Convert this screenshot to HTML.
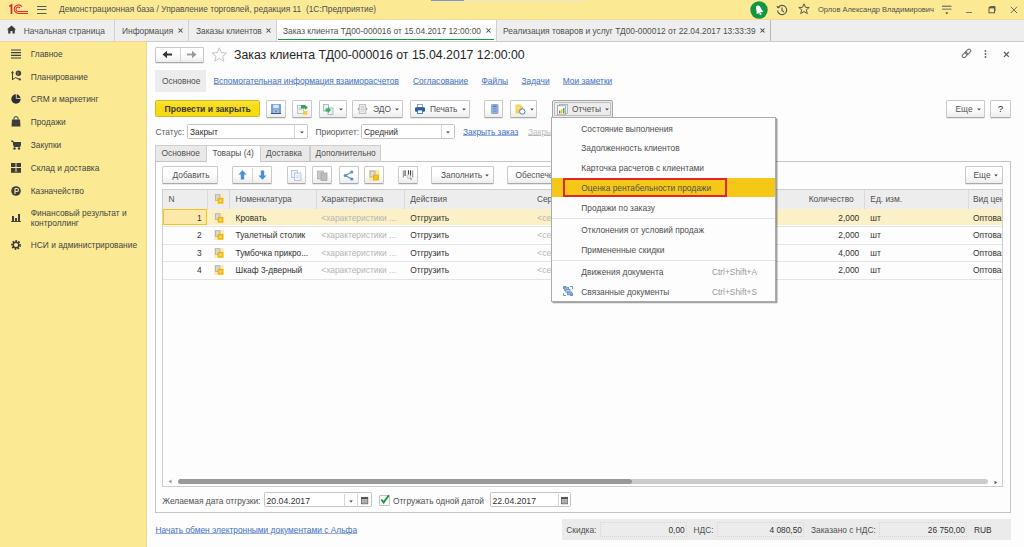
<!DOCTYPE html><html><head><meta charset="utf-8"><style>
html,body{margin:0;padding:0;width:1024px;height:547px;overflow:hidden;background:#fdfdfd}
body{position:relative;font-family:"Liberation Sans",sans-serif;font-size:8.4px;color:#505050}
.a{position:absolute;box-sizing:border-box}
.t{position:absolute;white-space:nowrap}
.lnk{color:#4070c2;text-decoration:underline;text-decoration-color:rgba(64,112,194,0.55);text-underline-offset:0.3px}
</style></head><body>
<div class="a" style="left:0px;top:0px;width:1024.00px;height:19.00px;background:#fce994"></div>
<div class="a" style="left:0px;top:19px;width:1024.00px;height:1.00px;background:#eedf9a"></div>
<div class="a" style="left:431px;top:0px;width:33.00px;height:1.00px;background:#8596cc"></div>
<div class="a" style="left:464px;top:0px;width:124.00px;height:1.00px;background:#ebe6c6"></div>
<div class="a" style="left:0px;top:20px;width:1024.00px;height:21.00px;background:#eeeeef"></div>
<div class="a" style="left:0px;top:41px;width:1024.00px;height:1.00px;background:#cdcdcd"></div>
<div class="a" style="left:0px;top:41px;width:147.00px;height:1.00px;background:#e2d9a6"></div>
<div class="a" style="left:0px;top:42px;width:146.80px;height:505.00px;background:#fce994"></div>
<div class="a" style="left:146.8px;top:42px;width:877.20px;height:505.00px;background:#fdfdfd"></div>
<div class="a" style="left:146px;top:42px;width:1.00px;height:505.00px;background:#eadb8a"></div>
<svg class="a" style="left:8px;top:3px" width="22" height="12" viewBox="0 0 22 12"><g fill="none" stroke="#e3262b" stroke-width="1.05"><path d="M1.3 3.4 L3.5 2 V11" stroke-width="1.7"/><path d="M13.9 3.6 A4.3 4.3 0 1 0 10.3 10.5 H20"/><path d="M12 5.1 A2.2 2.2 0 1 0 10.3 8.5 H20"/></g></svg>
<svg class="a" style="left:37px;top:5px" width="10" height="10" viewBox="0 0 10 10"><g stroke="#5a5a5a" stroke-width="1"><path d="M0 1.5H9.5M0 4.5H9.5M0 8.5H9.5"/></g></svg>
<div class="t " style="left:59px;top:3.40px;line-height:12px;">Демонстрационная база / Управление торговлей, редакция 11&nbsp; (1С:Предприятие)</div>
<svg class="a" style="left:750px;top:1px" width="18" height="18" viewBox="0 0 18 18"><circle cx="9" cy="9" r="8.7" fill="#13963f"/><g transform="rotate(-20 9 9)"><path d="M5.2 12 Q6.5 10.5 6.5 8 Q6.5 4.5 9 4.3 Q11.5 4.5 11.5 8 Q11.5 10.5 12.8 12Z" fill="#fff"/><circle cx="9" cy="13.2" r="1.1" fill="#fff"/></g></svg>
<svg class="a" style="left:776px;top:4px" width="12" height="12" viewBox="0 0 12 12"><g fill="none" stroke="#555" stroke-width="1.1"><path d="M2.2 3.5 A4.6 4.6 0 1 1 1.5 6.5"/><path d="M6 3.5V6.5L8 8"/><path d="M0.8 2.2 L2.2 3.8 L3.9 2.6"/></g></svg>
<svg class="a" style="left:798px;top:3px" width="12" height="12" viewBox="0 0 12 12"><path d="M6 0.8 L7.5 4.3 L11.2 4.5 L8.3 6.9 L9.3 10.6 L6 8.5 L2.7 10.6 L3.7 6.9 L0.8 4.5 L4.5 4.3Z" fill="none" stroke="#555" stroke-width="1"/></svg>
<div class="t " style="left:818px;top:3.60px;line-height:12px;font-size:7.5px">Орлов Александр Владимирович</div>
<svg class="a" style="left:941px;top:5px" width="11" height="11" viewBox="0 0 11 11"><g stroke="#555" stroke-width="1"><path d="M1 1.2H10.5"/></g><path d="M1 4.2H10.5" stroke="#8a8f70" stroke-width="1.3"/><path d="M4.3 7.5 H7.3 L5.8 9.2Z" fill="#333"/></svg>
<div class="a" style="left:966px;top:11.8px;width:6.30px;height:1.00px;background:#7a7a6a"></div>
<svg class="a" style="left:988px;top:6px" width="8" height="8" viewBox="0 0 8 8"><g fill="none" stroke="#5a5a50" stroke-width="1"><rect x="1" y="1.8" width="5.5" height="5"/><path d="M1 1.3H6.5" stroke-width="1.6"/><path d="M2.5 0.6H7V5.2"/></g></svg>
<svg class="a" style="left:1010px;top:6px" width="8" height="8" viewBox="0 0 8 8"><g stroke="#6a6a60" stroke-width="1"><path d="M0.8 0.8L7 7M7 0.8L0.8 7"/></g></svg>
<svg class="a" style="left:7px;top:25px" width="9" height="9" viewBox="0 0 9 9"><path d="M4.5 0.5 L9 4.5 H7.8 V8.5 H5.5 V6 H3.5 V8.5 H1.2 V4.5 H0Z" fill="#3a3a3a"/></svg>
<div class="t " style="left:23.8px;top:24.60px;line-height:12px;">Начальная страница</div>
<div class="a" style="left:114px;top:20px;width:1.00px;height:21.00px;background:#d2d2d6"></div>
<div class="t " style="left:122px;top:24.60px;line-height:12px;">Информация</div>
<svg class="a" style="left:178px;top:28px" width="5" height="5" viewBox="0 0 5 5"><path d="M0.5 0.5L4.5 4.5M4.5 0.5L0.5 4.5" stroke="#4a4a4a" stroke-width="1.05"/></svg>
<div class="a" style="left:188px;top:20px;width:1.00px;height:21.00px;background:#d2d2d6"></div>
<div class="t " style="left:196px;top:24.60px;line-height:12px;">Заказы клиентов</div>
<svg class="a" style="left:266px;top:28px" width="5" height="5" viewBox="0 0 5 5"><path d="M0.5 0.5L4.5 4.5M4.5 0.5L0.5 4.5" stroke="#4a4a4a" stroke-width="1.05"/></svg>
<div class="a" style="left:276px;top:20px;width:1.00px;height:21.00px;background:#d2d2d6"></div>
<div class="a" style="left:277px;top:20px;width:219.00px;height:21.00px;background:#ffffff"></div>
<div class="a" style="left:277.8px;top:38.7px;width:216.20px;height:1.30px;background:#139a3c"></div>
<div class="t " style="left:283px;top:24.60px;line-height:12px;">Заказ клиента ТД00-000016 от 15.04.2017 12:00:00</div>
<svg class="a" style="left:486px;top:28px" width="5" height="5" viewBox="0 0 5 5"><path d="M0.5 0.5L4.5 4.5M4.5 0.5L0.5 4.5" stroke="#4a4a4a" stroke-width="1.05"/></svg>
<div class="a" style="left:496px;top:20px;width:1.00px;height:21.00px;background:#d2d2d6"></div>
<div class="t " style="left:503px;top:24.60px;line-height:12px;">Реализация товаров и услуг ТД00-000012 от 22.04.2017 13:33:39</div>
<svg class="a" style="left:760px;top:28px" width="5" height="5" viewBox="0 0 5 5"><path d="M0.5 0.5L4.5 4.5M4.5 0.5L0.5 4.5" stroke="#4a4a4a" stroke-width="1.05"/></svg>
<div class="a" style="left:770px;top:20px;width:1.00px;height:21.00px;background:#b9b9b9"></div>
<div class="t " style="left:30.7px;top:47.70px;line-height:12px;color:#454545">Главное</div>
<div class="t " style="left:30.7px;top:70.60px;line-height:12px;color:#454545">Планирование</div>
<div class="t " style="left:30.7px;top:93.40px;line-height:12px;color:#454545">CRM и маркетинг</div>
<div class="t " style="left:30.7px;top:116.30px;line-height:12px;color:#454545">Продажи</div>
<div class="t " style="left:30.7px;top:139.00px;line-height:12px;color:#454545">Закупки</div>
<div class="t " style="left:30.7px;top:162.25px;line-height:12px;color:#454545">Склад и доставка</div>
<div class="t " style="left:30.7px;top:184.75px;line-height:12px;color:#454545">Казначейство</div>
<div class="t " style="left:30.7px;top:239.00px;line-height:12px;color:#454545">НСИ и администрирование</div>
<div class="t " style="left:30.7px;top:206.75px;line-height:12px;color:#454545">Финансовый результат и</div>
<div class="t " style="left:30.7px;top:216.75px;line-height:12px;color:#454545">контроллинг</div>
<svg class="a" style="left:11px;top:49px" width="10" height="10" viewBox="0 0 10 10"><g stroke="#3d3d3d" stroke-width="1.2"><path d="M0 1H10M0 3.7H10M0 6.3H10M0 9H10"/></g></svg>
<svg class="a" style="left:11px;top:70px" width="11" height="11" viewBox="0 0 11 11"><g fill="none" stroke="#3d3d3d" stroke-width="1"><path d="M1.5 10V2"/><path d="M1.5 9.6 L4.5 7.6 L8.8 9.4"/></g><path d="M0 3.2 L1.5 0.8 L3 3.2Z" fill="#3d3d3d"/><circle cx="8.8" cy="9.4" r="1.1" fill="#3d3d3d"/><circle cx="7.4" cy="3.3" r="2.7" fill="#3d3d3d"/><path d="M7 1.8V4.6" stroke="#bdb58a" stroke-width="0.8"/></svg>
<svg class="a" style="left:11.3px;top:94.2px" width="10" height="10" viewBox="0 0 10 10"><circle cx="5" cy="5" r="4.7" fill="#2e2e36"/><path d="M5.3 0 V4.4 H10" fill="none" stroke="#e8e0b0" stroke-width="0.9"/></svg>
<svg class="a" style="left:11px;top:116px" width="10" height="11" viewBox="0 0 10 11"><path d="M1 3.5 H9 L9.5 10.5 H0.5Z" fill="#3d3d3d"/><path d="M3 3.5 V1.5 Q5 -0.5 7 1.5 V3.5" fill="none" stroke="#3d3d3d" stroke-width="1"/></svg>
<svg class="a" style="left:11px;top:140px" width="10" height="10" viewBox="0 0 10 10"><path d="M0 1 H2 L3 6.5 H9 L10 2.5 H2.5" fill="#3d3d3d" stroke="#3d3d3d" stroke-width="1"/><circle cx="3.5" cy="8.5" r="1.2" fill="#3d3d3d"/><circle cx="8" cy="8.5" r="1.2" fill="#3d3d3d"/></svg>
<svg class="a" style="left:11px;top:163px" width="10" height="10" viewBox="0 0 10 10"><g fill="#3d3d3d"><rect x="0" y="0" width="4.5" height="4"/><rect x="5.5" y="0" width="4.5" height="4"/><rect x="0" y="5" width="4.5" height="4"/><rect x="5.5" y="5" width="4.5" height="4"/><rect x="0" y="9.2" width="10" height="0.8"/></g></svg>
<svg class="a" style="left:11px;top:186px" width="10" height="10" viewBox="0 0 10 10"><circle cx="5" cy="5" r="4.8" fill="#3d3d3d"/><path d="M4 2.5 H6 Q7.5 2.5 7.5 4 Q7.5 5.5 6 5.5 H4 M4 2.5 V8" fill="none" stroke="#fbeca2" stroke-width="1.1"/></svg>
<svg class="a" style="left:11px;top:213px" width="10" height="9" viewBox="0 0 10 9"><g fill="#3d3d3d"><rect x="1" y="3" width="2" height="6"/><rect x="4" y="5" width="2" height="4"/><rect x="7" y="1" width="2" height="8"/><rect x="0" y="8.2" width="10" height="0.8"/></g></svg>
<svg class="a" style="left:11px;top:240px" width="10" height="10" viewBox="0 0 10 10"><circle cx="5" cy="5" r="3.8" fill="none" stroke="#3d3d3d" stroke-width="2.2" stroke-dasharray="1.6 1.2"/><circle cx="5" cy="5" r="2.8" fill="none" stroke="#3d3d3d" stroke-width="1.4"/></svg>
<div class="a" style="left:155px;top:47px;width:49.00px;height:15.50px;border:1px solid #c9c9c9;border-bottom-color:#a9a9a9;border-radius:1.5px;background:linear-gradient(#ffffff 45%,#ededed);box-shadow:0 0.6px 0 #d4d4d4;"></div>
<div class="a" style="left:179.5px;top:48px;width:1.00px;height:13.50px;background:#d6d6d6"></div>
<svg class="a" style="left:162px;top:50px" width="11" height="9" viewBox="0 0 11 9"><path d="M3 4.5 H10" stroke="#333" stroke-width="2"/><path d="M0.5 4.5 L5 0.8 V8.2Z" fill="#333"/></svg>
<svg class="a" style="left:186px;top:50px" width="11" height="9" viewBox="0 0 11 9"><path d="M1 4.5 H8" stroke="#9a9a9a" stroke-width="1.8"/><path d="M10.5 4.5 L6 0.8 V8.2Z" fill="#9a9a9a"/></svg>
<svg class="a" style="left:211px;top:47px" width="17" height="15" viewBox="0 0 17 15"><path d="M8.3 0.8 L10.3 5.6 L15.6 6 L11.6 9.3 L12.9 14.2 L8.3 11.5 L3.7 14.2 L5 9.3 L1 6 L6.3 5.6Z" fill="none" stroke="#c4c4c4" stroke-width="1"/></svg>
<div class="t " style="left:234px;top:46.70px;line-height:16px;font-size:12.3px;color:#262626">Заказ клиента ТД00-000016 от 15.04.2017 12:00:00</div>
<svg class="a" style="left:960.5px;top:48px" width="11" height="11" viewBox="0 0 11 11"><g fill="none" stroke="#707070" stroke-width="1.1"><rect x="0.9" y="5.2" width="6" height="3.4" rx="1.7" transform="rotate(-45 3.9 6.9)"/><rect x="4.1" y="2" width="6" height="3.4" rx="1.7" transform="rotate(-45 7.1 3.7)"/></g></svg>
<svg class="a" style="left:984px;top:49px" width="3" height="10" viewBox="0 0 3 10"><g fill="#606060"><circle cx="1.5" cy="2" r="0.95"/><circle cx="1.5" cy="5" r="0.95"/><circle cx="1.5" cy="8" r="0.95"/></g></svg>
<svg class="a" style="left:1003px;top:51px" width="7" height="7" viewBox="0 0 7 7"><g stroke="#5a5a5a" stroke-width="1.2"><path d="M1 1L5.8 5.8M5.8 1L1 5.8"/></g></svg>
<div class="a" style="left:154.8px;top:69.5px;width:51.20px;height:22.00px;background:#ececec"></div>
<div class="t " style="left:162px;top:75.00px;line-height:12px;">Основное</div>
<div class="t lnk" style="left:213.5px;top:75.00px;line-height:12px;">Вспомогательная информация взаиморасчетов</div>
<div class="t lnk" style="left:413px;top:75.00px;line-height:12px;">Согласование</div>
<div class="t lnk" style="left:481.5px;top:75.00px;line-height:12px;">Файлы</div>
<div class="t lnk" style="left:521.5px;top:75.00px;line-height:12px;">Задачи</div>
<div class="t lnk" style="left:562.75px;top:75.00px;line-height:12px;">Мои заметки</div>
<div class="a" style="left:154.9px;top:99.9px;width:105.30px;height:17.60px;border:1px solid #d2b920;border-radius:1.5px;background:linear-gradient(#f9e23a,#f8dc14 40%,#f7da12)"></div>
<div class="t " style="left:164.6px;top:102.70px;line-height:12px;font-weight:bold;font-size:8.6px;color:#3a3a3a">Провести и закрыть</div>
<div class="a" style="left:266.2px;top:100px;width:19.80px;height:17.50px;border:1px solid #c9c9c9;border-bottom-color:#a9a9a9;border-radius:1.5px;background:linear-gradient(#ffffff 45%,#ededed);box-shadow:0 0.6px 0 #d4d4d4;"></div>
<svg class="a" style="left:271px;top:104px" width="10" height="10" viewBox="0 0 10 10"><path d="M0 0.8 Q0 0 0.8 0 H9.2 Q10 0 10 0.8 V10 H0Z" fill="#76a0d6"/><rect x="2.2" y="0.8" width="5.6" height="3.4" fill="#dfe8f5"/><rect x="2.4" y="5.6" width="5.2" height="3.4" fill="#b9c9e0"/><rect x="3.8" y="6.3" width="2.4" height="2" fill="#7e8da4"/><rect x="0" y="9" width="10" height="1" fill="#2b5590"/></svg>
<div class="a" style="left:292px;top:100px;width:20.00px;height:17.50px;border:1px solid #c9c9c9;border-bottom-color:#a9a9a9;border-radius:1.5px;background:linear-gradient(#ffffff 45%,#ededed);box-shadow:0 0.6px 0 #d4d4d4;"></div>
<svg class="a" style="left:296.5px;top:104px" width="11" height="11" viewBox="0 0 11 11"><rect x="0.5" y="1.5" width="6" height="8" fill="#f3f3f3" stroke="#a9b8cc" stroke-width="0.8"/><path d="M1.8 4H5M1.8 5.6H5" stroke="#b0b0b0" stroke-width="0.7"/><path d="M4 1 H8 L10.8 3.5 L8 6 V4.5 H4Z" fill="#2fa84f"/><rect x="6" y="7" width="4.5" height="3.8" fill="#f5cf3a"/></svg>
<div class="a" style="left:318.5px;top:100px;width:28.00px;height:17.50px;border:1px solid #c9c9c9;border-bottom-color:#a9a9a9;border-radius:1.5px;background:linear-gradient(#ffffff 45%,#ededed);box-shadow:0 0.6px 0 #d4d4d4;"></div>
<svg class="a" style="left:323px;top:104px" width="11" height="11" viewBox="0 0 11 11"><rect x="0.5" y="0.5" width="5" height="6.5" fill="#f1f1f1" stroke="#98acc8" stroke-width="0.8"/><rect x="5" y="4" width="5" height="6.5" fill="#f1f1f1" stroke="#98acc8" stroke-width="0.8"/><path d="M2.5 4.5 H5 V3 L8 6 L5 9 V7.5 H2.5Z" fill="#34b45a"/></svg>
<svg class="a" style="left:338.5px;top:107.6px" width="4" height="3" viewBox="0 0 4 3"><path d="M0.2 0.5H3.8L2 2.5Z" fill="#444"/></svg>
<div class="a" style="left:352.3px;top:100px;width:51.10px;height:17.50px;border:1px solid #c9c9c9;border-bottom-color:#a9a9a9;border-radius:1.5px;background:linear-gradient(#ffffff 45%,#ededed);box-shadow:0 0.6px 0 #d4d4d4;"></div>
<svg class="a" style="left:357px;top:104px" width="11" height="10" viewBox="0 0 11 10"><rect x="2.2" y="0.5" width="6.6" height="9" fill="#eeeeee" stroke="#b3b3b3" stroke-width="0.8"/><path d="M3.5 2.5H7.5M3.5 4H7.5M3.5 5.5H7.5M3.5 7H7.5" stroke="#c2c2c2" stroke-width="0.7"/><path d="M0.3 5 L2 3.6V6.4Z M10.7 5 L9 3.6V6.4Z" fill="#a0a0a0"/></svg>
<div class="t " style="left:373px;top:102.70px;line-height:12px;">ЭДО</div>
<svg class="a" style="left:395.0px;top:107.6px" width="4" height="3" viewBox="0 0 4 3"><path d="M0.2 0.5H3.8L2 2.5Z" fill="#444"/></svg>
<div class="a" style="left:409.7px;top:100px;width:60.30px;height:17.50px;border:1px solid #c9c9c9;border-bottom-color:#a9a9a9;border-radius:1.5px;background:linear-gradient(#ffffff 45%,#ededed);box-shadow:0 0.6px 0 #d4d4d4;"></div>
<svg class="a" style="left:415px;top:104px" width="10" height="10" viewBox="0 0 10 10"><rect x="2.5" y="0.5" width="5" height="3" fill="#fff" stroke="#6c8fc0" stroke-width="0.8"/><rect x="0" y="3.3" width="10" height="4.5" rx="1" fill="#2c5ea6"/><rect x="2.5" y="6" width="5" height="3.5" fill="#fff" stroke="#2c5ea6" stroke-width="0.8"/></svg>
<div class="t " style="left:430px;top:102.70px;line-height:12px;">Печать</div>
<svg class="a" style="left:461.5px;top:107.6px" width="4" height="3" viewBox="0 0 4 3"><path d="M0.2 0.5H3.8L2 2.5Z" fill="#444"/></svg>
<div class="a" style="left:484.4px;top:100px;width:19.10px;height:17.50px;border:1px solid #c9c9c9;border-bottom-color:#a9a9a9;border-radius:1.5px;background:linear-gradient(#ffffff 45%,#ededed);box-shadow:0 0.6px 0 #d4d4d4;"></div>
<svg class="a" style="left:490.5px;top:104px" width="8" height="10" viewBox="0 0 8 10"><rect x="0.4" y="0.4" width="6.6" height="9.2" rx="1" fill="#a9c1e6" stroke="#6b8fc7" stroke-width="0.8"/><rect x="1.6" y="1.6" width="4.2" height="1.6" fill="#4f78b8"/><path d="M1.6 4.6H5.8M1.6 6.2H5.8M1.6 7.8H5.8" stroke="#4f78b8" stroke-width="0.7"/></svg>
<div class="a" style="left:510px;top:100px;width:27.40px;height:17.50px;border:1px solid #c9c9c9;border-bottom-color:#a9a9a9;border-radius:1.5px;background:linear-gradient(#ffffff 45%,#ededed);box-shadow:0 0.6px 0 #d4d4d4;"></div>
<svg class="a" style="left:515px;top:103.5px" width="11" height="11" viewBox="0 0 11 11"><path d="M0.5 0.5 H5.5 L8 3 V9.5 H0.5Z" fill="#f1cf56"/><path d="M1.5 3H5M1.5 4.5H4" stroke="#fff3c0" stroke-width="0.7"/><circle cx="7.3" cy="7.5" r="2.7" fill="#fff" stroke="#4f78b8" stroke-width="1"/></svg>
<svg class="a" style="left:529.5px;top:107.6px" width="4" height="3" viewBox="0 0 4 3"><path d="M0.2 0.5H3.8L2 2.5Z" fill="#444"/></svg>
<div class="a" style="left:551.7px;top:100.3px;width:61.30px;height:17.70px;border:1px solid #a4a4a4;border-radius:2px;background:#ececec"></div>
<div class="a" style="left:553.6px;top:102.2px;width:57.60px;height:13.80px;border:1px solid #bdbdbd;border-radius:1px"></div>
<svg class="a" style="left:556.5px;top:104px" width="11" height="11" viewBox="0 0 11 11"><rect x="2.5" y="0.5" width="8" height="9" fill="#f4f4f4" stroke="#9aaac0" stroke-width="0.8"/><rect x="0.5" y="1.8" width="8" height="9" fill="#fff" stroke="#8a9ab0" stroke-width="0.8"/><rect x="2" y="6.5" width="1.4" height="3" fill="#e0502a"/><rect x="4" y="5" width="1.4" height="4.5" fill="#f2c21a"/><rect x="6" y="4" width="1.4" height="5.5" fill="#34a853"/></svg>
<div class="t " style="left:572px;top:102.70px;line-height:12px;">Отчеты</div>
<svg class="a" style="left:604.5px;top:107.6px" width="4" height="3" viewBox="0 0 4 3"><path d="M0.2 0.5H3.8L2 2.5Z" fill="#444"/></svg>
<div class="a" style="left:946.2px;top:100px;width:38.40px;height:17.50px;border:1px solid #c9c9c9;border-bottom-color:#a9a9a9;border-radius:1.5px;background:linear-gradient(#ffffff 45%,#ededed);box-shadow:0 0.6px 0 #d4d4d4;"></div>
<div class="t " style="left:955.5px;top:102.70px;line-height:12px;">Еще</div>
<svg class="a" style="left:976.5px;top:107.6px" width="4" height="3" viewBox="0 0 4 3"><path d="M0.2 0.5H3.8L2 2.5Z" fill="#444"/></svg>
<div class="a" style="left:990.4px;top:100px;width:20.20px;height:17.50px;border:1px solid #c9c9c9;border-bottom-color:#a9a9a9;border-radius:1.5px;background:linear-gradient(#ffffff 45%,#ededed);box-shadow:0 0.6px 0 #d4d4d4;"></div>
<div class="t " style="left:997.8px;top:103.00px;line-height:12px;font-size:9.8px;color:#1a1a1a">?</div>
<div class="t " style="left:155.5px;top:125.70px;line-height:12px;color:#5c5c5c">Статус:</div>
<div class="a" style="left:187px;top:124.1px;width:121.00px;height:14.50px;border:1px solid #c4c4c4;background:#fff;border-radius:1.5px"></div>
<div class="a" style="left:293.6px;top:125.1px;width:1.00px;height:12.50px;background:#d6d6d6"></div>
<div class="t " style="left:190px;top:125.70px;line-height:12px;color:#333">Закрыт</div>
<svg class="a" style="left:299.5px;top:130.8px" width="4" height="3" viewBox="0 0 4 3"><path d="M0.2 0.5H3.8L2 2.5Z" fill="#444"/></svg>
<div class="t " style="left:315.5px;top:125.70px;line-height:12px;color:#5c5c5c">Приоритет:</div>
<div class="a" style="left:361.3px;top:124.1px;width:93.50px;height:14.50px;border:1px solid #c4c4c4;background:#fff;border-radius:1.5px"></div>
<div class="a" style="left:440.6px;top:125.1px;width:1.00px;height:12.50px;background:#d6d6d6"></div>
<div class="t " style="left:364px;top:125.70px;line-height:12px;color:#333">Средний</div>
<svg class="a" style="left:446.0px;top:130.8px" width="4" height="3" viewBox="0 0 4 3"><path d="M0.2 0.5H3.8L2 2.5Z" fill="#444"/></svg>
<div class="t lnk" style="left:463px;top:125.70px;line-height:12px;">Закрыть заказ</div>
<div class="t " style="left:528px;top:125.70px;line-height:12px;color:#b9b9b9;text-decoration:underline;text-underline-offset:0.3px">Закрыть</div>
<div class="a" style="left:155px;top:161px;width:855.50px;height:351.50px;border:1px solid #c4c4c4;background:#fdfdfd"></div>
<div class="a" style="left:155px;top:145.2px;width:51.50px;height:16.30px;border:1px solid #cdcdcd;border-bottom:none;background:#e9e9e9"></div>
<div class="a" style="left:206px;top:145.2px;width:54.50px;height:16.80px;border:1px solid #cdcdcd;border-bottom:none;background:#fdfdfd"></div>
<div class="a" style="left:260px;top:145.2px;width:50.00px;height:16.30px;border:1px solid #cdcdcd;border-bottom:none;background:#e9e9e9"></div>
<div class="a" style="left:309.5px;top:145.2px;width:71.50px;height:16.30px;border:1px solid #cdcdcd;border-bottom:none;background:#e9e9e9"></div>
<div class="t " style="left:161.5px;top:147.00px;line-height:12px;">Основное</div>
<div class="t " style="left:212.5px;top:147.00px;line-height:12px;">Товары (4)</div>
<div class="t " style="left:266px;top:147.00px;line-height:12px;">Доставка</div>
<div class="t " style="left:315.5px;top:147.00px;line-height:12px;">Дополнительно</div>
<div class="a" style="left:162.4px;top:166px;width:56.10px;height:17.50px;border:1px solid #c9c9c9;border-bottom-color:#a9a9a9;border-radius:1.5px;background:linear-gradient(#ffffff 45%,#ededed);box-shadow:0 0.6px 0 #d4d4d4;"></div>
<div class="t " style="left:172.5px;top:169.00px;line-height:12px;">Добавить</div>
<div class="a" style="left:232.25px;top:166px;width:40.00px;height:17.50px;border:1px solid #c9c9c9;border-bottom-color:#a9a9a9;border-radius:1.5px;background:linear-gradient(#ffffff 45%,#ededed);box-shadow:0 0.6px 0 #d4d4d4;"></div>
<div class="a" style="left:251.75px;top:167.5px;width:1.00px;height:15.00px;background:#d6d6d6"></div>
<svg class="a" style="left:238px;top:170px" width="9" height="10" viewBox="0 0 9 10"><path d="M4.5 0.3 L8.6 4.6 H6.2 V9.6 H2.8 V4.6 H0.4Z" fill="#4a8ede"/></svg>
<svg class="a" style="left:258px;top:170px" width="9" height="10" viewBox="0 0 9 10"><path d="M4.5 9.7 L8.6 5.4 H6.2 V0.4 H2.8 V5.4 H0.4Z" fill="#4a8ede"/></svg>
<div class="a" style="left:286.5px;top:166px;width:19.00px;height:17.50px;border:1px solid #c9c9c9;border-bottom-color:#a9a9a9;border-radius:1.5px;background:linear-gradient(#ffffff 45%,#ededed);box-shadow:0 0.6px 0 #d4d4d4;"></div>
<svg class="a" style="left:290.5px;top:169.5px" width="11" height="11" viewBox="0 0 11 11"><rect x="0.5" y="0.5" width="6" height="7" fill="#f2f5fa" stroke="#a8bedc" stroke-width="0.8"/><rect x="3.5" y="3" width="6.5" height="7.5" fill="#f2f5fa" stroke="#a8bedc" stroke-width="0.8"/><path d="M5 6H8.5M5 7.6H8.5" stroke="#bfcde0" stroke-width="0.6"/></svg>
<div class="a" style="left:312.25px;top:166px;width:19.25px;height:17.50px;border:1px solid #c9c9c9;border-bottom-color:#a9a9a9;border-radius:1.5px;background:linear-gradient(#ffffff 45%,#ededed);box-shadow:0 0.6px 0 #d4d4d4;"></div>
<svg class="a" style="left:316.5px;top:169.5px" width="11" height="11" viewBox="0 0 11 11"><rect x="0.5" y="1" width="6" height="8" fill="#c9c9c9" stroke="#b0b0b0" stroke-width="0.8"/><rect x="4" y="3" width="6" height="7.5" fill="#bcbcbc" stroke="#a8a8a8" stroke-width="0.8"/></svg>
<div class="a" style="left:338.5px;top:166px;width:20.00px;height:17.50px;border:1px solid #c9c9c9;border-bottom-color:#a9a9a9;border-radius:1.5px;background:linear-gradient(#ffffff 45%,#ededed);box-shadow:0 0.6px 0 #d4d4d4;"></div>
<svg class="a" style="left:343px;top:169.5px" width="11" height="11" viewBox="0 0 11 11"><path d="M8.8 2 L2.3 5.5 L8.8 9" fill="none" stroke="#5b8fd0" stroke-width="1.1"/><circle cx="2.3" cy="5.5" r="1.6" fill="#5b8fd0"/><circle cx="8.8" cy="2" r="1.6" fill="#5b8fd0"/><circle cx="8.8" cy="9" r="1.6" fill="#5b8fd0"/></svg>
<div class="a" style="left:364.25px;top:166px;width:20.00px;height:17.50px;border:1px solid #c9c9c9;border-bottom-color:#a9a9a9;border-radius:1.5px;background:linear-gradient(#ffffff 45%,#ededed);box-shadow:0 0.6px 0 #d4d4d4;"></div>
<svg class="a" style="left:369.3px;top:169.8px" width="10.5" height="11" viewBox="0 0 10.5 11"><rect x="0" y="0" width="10.5" height="11" fill="#fbeaa6"/><rect x="1" y="1" width="5" height="6" fill="#dcdcdc" stroke="#a0a0a0" stroke-width="0.7"/><rect x="4.5" y="5" width="5" height="5" fill="#f3c51c" stroke="#d9a800" stroke-width="0.7"/></svg>
<div class="a" style="left:398px;top:166px;width:19.70px;height:17.50px;border:1px solid #c9c9c9;border-bottom-color:#a9a9a9;border-radius:1.5px;background:linear-gradient(#ffffff 45%,#ededed);box-shadow:0 0.6px 0 #d4d4d4;"></div>
<svg class="a" style="left:402px;top:169px" width="12" height="12" viewBox="0 0 12 12"><g stroke-width="1"><path d="M1.3 1.5V8.5M10.7 1.5V8.5" stroke="#8a8a8a"/><path d="M3.1 1.3V7M6.4 1.3V6M8.6 1.3V7" stroke="#2f2f2f"/></g><circle cx="6.8" cy="7.6" r="2" fill="#dde9f7" stroke="#a9bdd6" stroke-width="0.8"/><path d="M8.2 9 L9.8 10.8" stroke="#d9894a" stroke-width="1.2"/></svg>
<div class="a" style="left:431.4px;top:166px;width:62.30px;height:17.50px;border:1px solid #c9c9c9;border-bottom-color:#a9a9a9;border-radius:1.5px;background:linear-gradient(#ffffff 45%,#ededed);box-shadow:0 0.6px 0 #d4d4d4;"></div>
<div class="t " style="left:441px;top:169.00px;line-height:12px;">Заполнить</div>
<svg class="a" style="left:484.5px;top:173.8px" width="4" height="3" viewBox="0 0 4 3"><path d="M0.2 0.5H3.8L2 2.5Z" fill="#444"/></svg>
<div class="a" style="left:507.3px;top:166px;width:72.70px;height:17.50px;border:1px solid #c9c9c9;border-bottom-color:#a9a9a9;border-radius:1.5px;background:linear-gradient(#ffffff 45%,#ededed);box-shadow:0 0.6px 0 #d4d4d4;"></div>
<div class="t " style="left:515.5px;top:169.00px;line-height:12px;">Обеспечение</div>
<div class="a" style="left:965px;top:166px;width:37.60px;height:17.50px;border:1px solid #c9c9c9;border-bottom-color:#a9a9a9;border-radius:1.5px;background:linear-gradient(#ffffff 45%,#ededed);box-shadow:0 0.6px 0 #d4d4d4;"></div>
<div class="t " style="left:973.5px;top:169.00px;line-height:12px;">Еще</div>
<svg class="a" style="left:994.0px;top:173.8px" width="4" height="3" viewBox="0 0 4 3"><path d="M0.2 0.5H3.8L2 2.5Z" fill="#444"/></svg>
<div class="a" style="left:162px;top:189px;width:841.00px;height:297.50px;border:1px solid #cdd0d0;background:#fdfdfd"></div>
<div class="a" style="left:163px;top:190px;width:839.00px;height:18.80px;background:#ededed"></div>
<div class="a" style="left:207.3px;top:190px;width:1.00px;height:18.80px;background:#dadada"></div>
<div class="a" style="left:229px;top:190px;width:1.00px;height:18.80px;background:#dadada"></div>
<div class="a" style="left:315.5px;top:190px;width:1.00px;height:18.80px;background:#dadada"></div>
<div class="a" style="left:404.4px;top:190px;width:1.00px;height:18.80px;background:#dadada"></div>
<div class="a" style="left:864.2px;top:190px;width:1.00px;height:18.80px;background:#dadada"></div>
<div class="a" style="left:968px;top:190px;width:1.00px;height:18.80px;background:#dadada"></div>
<div class="a" style="left:163px;top:208.5px;width:839.00px;height:0.80px;background:#e0e0e0"></div>
<div class="a" style="left:163px;top:209.3px;width:839.00px;height:16.00px;background:#fcf0c6"></div>
<div class="a" style="left:163px;top:225.6px;width:839.00px;height:1.00px;background:#e4e4e4"></div>
<div class="a" style="left:163px;top:243.5px;width:839.00px;height:1.00px;background:#e4e4e4"></div>
<div class="a" style="left:163px;top:261.2px;width:839.00px;height:1.00px;background:#e4e4e4"></div>
<div class="a" style="left:163px;top:278.6px;width:839.00px;height:1.00px;background:#e4e4e4"></div>
<div class="a" style="left:163px;top:209.2px;width:44.20px;height:16.00px;border:1.8px solid #f4c214;background:#fce8a8"></div>
<div class="t " style="left:168.5px;top:192.50px;line-height:12px;">N</div>
<svg class="a" style="left:213.5px;top:194px" width="10" height="10" viewBox="0 0 10 10"><rect x="0" y="0" width="10" height="10" fill="#fcedb8"/><rect x="1.5" y="0.8" width="4.5" height="5.5" fill="#d8d8dc" stroke="#a4a4ac" stroke-width="0.7"/><rect x="4" y="4.2" width="5" height="5" fill="#f3c01a" stroke="#e0a800" stroke-width="0.6"/><rect x="5.5" y="5.8" width="2" height="2" fill="#f8dc70"/></svg>
<div class="t " style="left:235.5px;top:192.50px;line-height:12px;">Номенклатура</div>
<div class="t " style="left:321.25px;top:192.50px;line-height:12px;">Характеристика</div>
<div class="t " style="left:410.3px;top:192.50px;line-height:12px;">Действия</div>
<div class="t " style="left:536.9px;top:192.50px;line-height:12px;">Серия</div>
<div class="t " style="right:170.30px;top:192.50px;line-height:12px;">Количество</div>
<div class="t " style="left:870.3px;top:192.50px;line-height:12px;">Ед. изм.</div>
<div class="a" style="left:968.5px;top:192.50px;width:33.50px;height:12px;overflow:hidden"><div class="t" style="left:4.5px;top:0;line-height:12px;">Вид цен</div></div>
<div class="t " style="right:822.30px;top:211.50px;line-height:12px;color:#333">1</div>
<svg class="a" style="left:213.5px;top:212.5px" width="10" height="10" viewBox="0 0 10 10"><rect x="0" y="0" width="10" height="10" fill="#fcedb8"/><rect x="1.5" y="0.8" width="4.5" height="5.5" fill="#d8d8dc" stroke="#a4a4ac" stroke-width="0.7"/><rect x="4" y="4.2" width="5" height="5" fill="#f3c01a" stroke="#e0a800" stroke-width="0.6"/><rect x="5.5" y="5.8" width="2" height="2" fill="#f8dc70"/></svg>
<div class="t " style="left:235.5px;top:211.50px;line-height:12px;color:#333">Кровать</div>
<div class="t " style="left:321.25px;top:211.50px;line-height:12px;color:#b5b5b5">&lt;характеристики ...</div>
<div class="t " style="left:410.3px;top:211.50px;line-height:12px;color:#333">Отгрузить</div>
<div class="t " style="left:537.3px;top:211.50px;line-height:12px;color:#b5b5b5">&lt;серии</div>
<div class="t " style="right:164.80px;top:211.50px;line-height:12px;color:#333">2,000</div>
<div class="t " style="left:870.3px;top:211.50px;line-height:12px;color:#333">шт</div>
<div class="a" style="left:968.5px;top:211.50px;width:33.50px;height:12px;overflow:hidden"><div class="t" style="left:4.5px;top:0;line-height:12px;color:#333">Оптовая</div></div>
<div class="t " style="right:822.30px;top:228.85px;line-height:12px;color:#333">2</div>
<svg class="a" style="left:213.5px;top:229.85000000000002px" width="10" height="10" viewBox="0 0 10 10"><rect x="0" y="0" width="10" height="10" fill="#fcedb8"/><rect x="1.5" y="0.8" width="4.5" height="5.5" fill="#d8d8dc" stroke="#a4a4ac" stroke-width="0.7"/><rect x="4" y="4.2" width="5" height="5" fill="#f3c01a" stroke="#e0a800" stroke-width="0.6"/><rect x="5.5" y="5.8" width="2" height="2" fill="#f8dc70"/></svg>
<div class="t " style="left:235.5px;top:228.85px;line-height:12px;color:#333">Туалетный столик</div>
<div class="t " style="left:321.25px;top:228.85px;line-height:12px;color:#b5b5b5">&lt;характеристики ...</div>
<div class="t " style="left:410.3px;top:228.85px;line-height:12px;color:#333">Отгрузить</div>
<div class="t " style="left:537.3px;top:228.85px;line-height:12px;color:#b5b5b5">&lt;серии</div>
<div class="t " style="right:164.80px;top:228.85px;line-height:12px;color:#333">2,000</div>
<div class="t " style="left:870.3px;top:228.85px;line-height:12px;color:#333">шт</div>
<div class="a" style="left:968.5px;top:228.85px;width:33.50px;height:12px;overflow:hidden"><div class="t" style="left:4.5px;top:0;line-height:12px;color:#333">Оптовая</div></div>
<div class="t " style="right:822.30px;top:246.65px;line-height:12px;color:#333">3</div>
<svg class="a" style="left:213.5px;top:247.65px" width="10" height="10" viewBox="0 0 10 10"><rect x="0" y="0" width="10" height="10" fill="#fcedb8"/><rect x="1.5" y="0.8" width="4.5" height="5.5" fill="#d8d8dc" stroke="#a4a4ac" stroke-width="0.7"/><rect x="4" y="4.2" width="5" height="5" fill="#f3c01a" stroke="#e0a800" stroke-width="0.6"/><rect x="5.5" y="5.8" width="2" height="2" fill="#f8dc70"/></svg>
<div class="t " style="left:235.5px;top:246.65px;line-height:12px;color:#333">Тумбочка прикро...</div>
<div class="t " style="left:321.25px;top:246.65px;line-height:12px;color:#b5b5b5">&lt;характеристики ...</div>
<div class="t " style="left:410.3px;top:246.65px;line-height:12px;color:#333">Отгрузить</div>
<div class="t " style="left:537.3px;top:246.65px;line-height:12px;color:#b5b5b5">&lt;серии</div>
<div class="t " style="right:164.80px;top:246.65px;line-height:12px;color:#333">4,000</div>
<div class="t " style="left:870.3px;top:246.65px;line-height:12px;color:#333">шт</div>
<div class="a" style="left:968.5px;top:246.65px;width:33.50px;height:12px;overflow:hidden"><div class="t" style="left:4.5px;top:0;line-height:12px;color:#333">Оптовая</div></div>
<div class="t " style="right:822.30px;top:264.20px;line-height:12px;color:#333">4</div>
<svg class="a" style="left:213.5px;top:265.2px" width="10" height="10" viewBox="0 0 10 10"><rect x="0" y="0" width="10" height="10" fill="#fcedb8"/><rect x="1.5" y="0.8" width="4.5" height="5.5" fill="#d8d8dc" stroke="#a4a4ac" stroke-width="0.7"/><rect x="4" y="4.2" width="5" height="5" fill="#f3c01a" stroke="#e0a800" stroke-width="0.6"/><rect x="5.5" y="5.8" width="2" height="2" fill="#f8dc70"/></svg>
<div class="t " style="left:235.5px;top:264.20px;line-height:12px;color:#333">Шкаф 3-дверный</div>
<div class="t " style="left:321.25px;top:264.20px;line-height:12px;color:#b5b5b5">&lt;характеристики ...</div>
<div class="t " style="left:410.3px;top:264.20px;line-height:12px;color:#333">Отгрузить</div>
<div class="t " style="left:537.3px;top:264.20px;line-height:12px;color:#b5b5b5">&lt;серии</div>
<div class="t " style="right:164.80px;top:264.20px;line-height:12px;color:#333">2,000</div>
<div class="t " style="left:870.3px;top:264.20px;line-height:12px;color:#333">шт</div>
<div class="a" style="left:968.5px;top:264.20px;width:33.50px;height:12px;overflow:hidden"><div class="t" style="left:4.5px;top:0;line-height:12px;color:#333">Оптовая</div></div>
<div class="a" style="left:1002px;top:189px;width:22.00px;height:101.00px;background:transparent"></div>
<div class="a" style="left:630px;top:478.8px;width:358.00px;height:5.20px;background:#cbcbcb;border-radius:2.6px"></div>
<div class="a" style="left:178px;top:478.8px;width:454.00px;height:5.20px;background:#999999;border-radius:2.6px"></div>
<svg class="a" style="left:168px;top:479px" width="4" height="5" viewBox="0 0 4 5"><path d="M3.5 0.5 L0.5 2.5 L3.5 4.5Z" fill="#999"/></svg>
<svg class="a" style="left:994px;top:479.5px" width="4" height="5" viewBox="0 0 4 5"><path d="M0.5 0.8 L3.2 2.5 L0.5 4.2Z" fill="#555"/></svg>
<div class="t " style="left:162.25px;top:494.50px;line-height:12px;">Желаемая дата отгрузки:</div>
<div class="a" style="left:263.5px;top:492.3px;width:108.00px;height:15.20px;border:1px solid #c4c4c4;background:#fff;border-radius:1.5px"></div>
<div class="a" style="left:343.5px;top:494px;width:1.00px;height:12.80px;background:#d6d6d6"></div>
<div class="a" style="left:357.25px;top:494px;width:1.00px;height:12.80px;background:#d6d6d6"></div>
<div class="t " style="left:266.5px;top:494.50px;line-height:12px;color:#333;font-size:8.7px">20.04.2017</div>
<svg class="a" style="left:348.5px;top:499.6px" width="4" height="3" viewBox="0 0 4 3"><path d="M0.2 0.5H3.8L2 2.5Z" fill="#444"/></svg>
<svg class="a" style="left:361px;top:497px" width="7.5" height="7.5" viewBox="0 0 7.5 7.5"><rect x="0.4" y="0.4" width="6.4" height="6.4" fill="#d8d8d8" stroke="#5a5a5a" stroke-width="0.8"/><rect x="0.4" y="0.4" width="6.4" height="1.8" fill="#4a4a4a"/><path d="M1.5 3.8H2.6M3.1 3.8H4.2M4.7 3.8H5.8M1.5 5.3H2.6M3.1 5.3H4.2M4.7 5.3H5.8" stroke="#666" stroke-width="0.9"/></svg>
<div class="a" style="left:379.3px;top:494.8px;width:10.50px;height:11.00px;border:1px solid #c2c2c2;background:#fff;border-radius:1px"></div>
<svg class="a" style="left:379px;top:493px" width="12" height="12" viewBox="0 0 12 12"><path d="M2.25 6.5 L4.7 9.4 L9.8 2.3" fill="none" stroke="#14983a" stroke-width="1.9"/></svg>
<div class="t " style="left:393px;top:494.50px;line-height:12px;">Отгружать одной датой</div>
<div class="a" style="left:490px;top:492.3px;width:81.25px;height:15.20px;border:1px solid #c4c4c4;background:#fff;border-radius:1.5px"></div>
<div class="a" style="left:557.5px;top:494px;width:1.00px;height:12.80px;background:#d6d6d6"></div>
<div class="t " style="left:492.5px;top:494.50px;line-height:12px;color:#333;font-size:8.7px">22.04.2017</div>
<svg class="a" style="left:560.8px;top:497px" width="7.5" height="7.5" viewBox="0 0 7.5 7.5"><rect x="0.4" y="0.4" width="6.4" height="6.4" fill="#d8d8d8" stroke="#5a5a5a" stroke-width="0.8"/><rect x="0.4" y="0.4" width="6.4" height="1.8" fill="#4a4a4a"/><path d="M1.5 3.8H2.6M3.1 3.8H4.2M4.7 3.8H5.8M1.5 5.3H2.6M3.1 5.3H4.2M4.7 5.3H5.8" stroke="#666" stroke-width="0.9"/></svg>
<div class="t lnk" style="left:155.5px;top:524.00px;line-height:12px;">Начать обмен электронными документами с Альфа</div>
<div class="a" style="left:562px;top:519px;width:449.00px;height:21.00px;background:#ebebeb"></div>
<div class="t " style="left:566.25px;top:523.50px;line-height:12px;">Скидка:</div>
<div class="a" style="left:599.5px;top:521.8px;width:87.75px;height:14.80px;border:1px dotted #d6d6d6;background:#ececec"></div>
<div class="t " style="right:339.25px;top:523.50px;line-height:12px;color:#333">0,00</div>
<div class="t " style="left:693.5px;top:523.50px;line-height:12px;">НДС:</div>
<div class="a" style="left:716.5px;top:521.8px;width:87.50px;height:14.80px;border:1px dotted #d6d6d6;background:#ececec"></div>
<div class="t " style="right:222.00px;top:523.50px;line-height:12px;color:#333">4 080,50</div>
<div class="t " style="left:811px;top:523.50px;line-height:12px;">Заказано с НДС:</div>
<div class="a" style="left:879px;top:521.8px;width:87.80px;height:14.80px;border:1px dotted #d6d6d6;background:#ececec"></div>
<div class="t " style="right:59.00px;top:523.50px;line-height:12px;color:#333">26 750,00</div>
<div class="t " style="left:974px;top:523.50px;line-height:12px;color:#333">RUB</div>
<div class="a" style="left:551px;top:117.2px;width:225.00px;height:184.60px;border:1px solid #ababab;background:#fdfdfd;box-shadow:1.5px 1.2px 0.3px rgba(0,0,0,0.36)"></div>
<div class="a" style="left:552px;top:177.8px;width:223.00px;height:19.20px;background:#f5c818"></div>
<div class="a" style="left:563.3px;top:177.8px;width:163.30px;height:19.70px;border:2.5px solid #e3262b"></div>
<div class="t " style="left:581.3px;top:122.60px;line-height:12px;">Состояние выполнения</div>
<div class="t " style="left:581.3px;top:142.30px;line-height:12px;">Задолженность клиентов</div>
<div class="t " style="left:581.3px;top:162.00px;line-height:12px;">Карточка расчетов с клиентами</div>
<div class="t " style="left:581.3px;top:181.60px;line-height:12px;">Оценка рентабельности продажи</div>
<div class="t " style="left:581.3px;top:201.60px;line-height:12px;">Продажи по заказу</div>
<div class="t " style="left:581.3px;top:223.60px;line-height:12px;">Отклонения от условий продаж</div>
<div class="t " style="left:581.3px;top:243.50px;line-height:12px;">Примененные скидки</div>
<div class="t " style="left:581.3px;top:266.30px;line-height:12px;">Движения документа</div>
<div class="t " style="left:581.3px;top:285.70px;line-height:12px;">Связанные документы</div>
<div class="a" style="left:552px;top:217.5px;width:223.00px;height:1.00px;background:#e2e2e2"></div>
<div class="a" style="left:552px;top:260px;width:223.00px;height:1.00px;background:#e2e2e2"></div>
<div class="t " style="left:711.9px;top:266.30px;line-height:12px;color:#9a9a9a">Ctrl+Shift+A</div>
<div class="t " style="left:711.9px;top:285.70px;line-height:12px;color:#9a9a9a">Ctrl+Shift+S</div>
<svg class="a" style="left:563px;top:286px" width="10" height="10" viewBox="0 0 10 10"><g fill="none" stroke="#5d8ac6" stroke-width="0.9"><path d="M0.5 3V0.5H3M9.5 3V0.5H7M0.5 7V9.5H3M9.5 7V9.5H7"/></g><rect x="1.5" y="1.2" width="4" height="3.2" fill="#9fb9de" stroke="#5d8ac6" stroke-width="0.8"/><rect x="2.8" y="3.6" width="4.2" height="2.6" fill="#c4d4ea" stroke="#5d8ac6" stroke-width="0.8"/><rect x="4.4" y="6.2" width="4.4" height="2.6" fill="#9fb9de" stroke="#5d8ac6" stroke-width="0.8"/></svg>
</body></html>
